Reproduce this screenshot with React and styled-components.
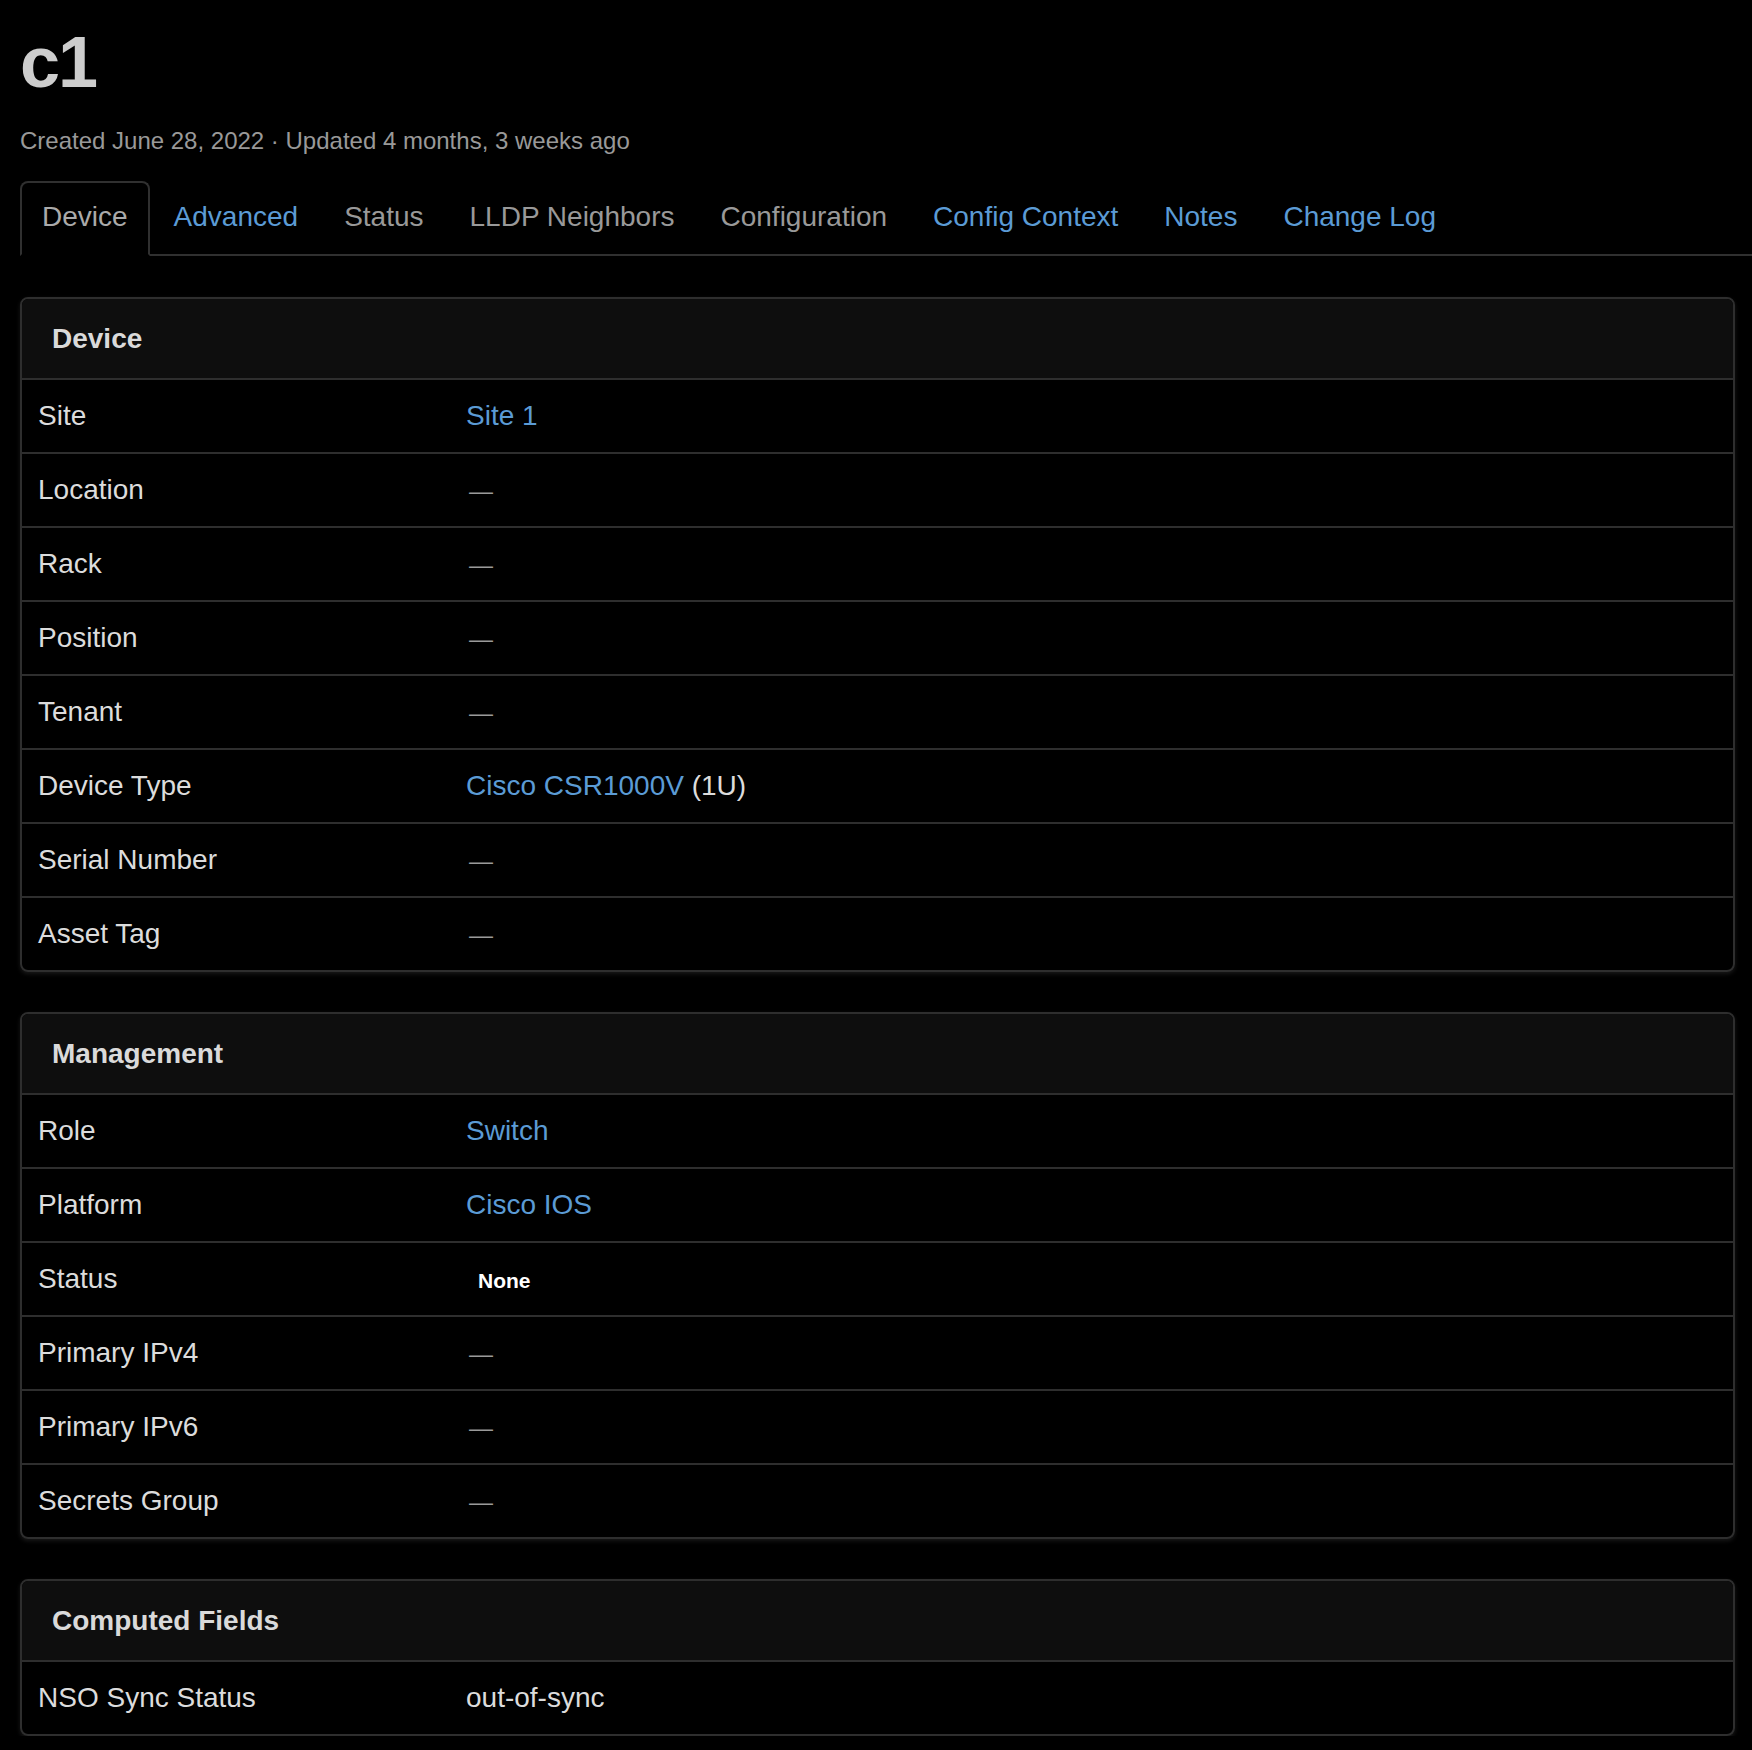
import React from 'react'
import styled, { createGlobalStyle } from 'styled-components'

const GlobalStyle = createGlobalStyle`
    body {
        margin: 0;
        background: #000;
        color: #dcdcdc;
        font-family: "Liberation Sans", Helvetica, Arial, sans-serif;
    }
`

const Page = styled.div`
    padding: 0 17px 0 20px;
`

const Title = styled.h1`
    margin: 23px 0 0;
    font-size: 72px;
    line-height: 79px;
    font-weight: 700;
    letter-spacing: -2px;
    color: #cdcdcd;
`

const Subtitle = styled.p`
    margin: 22px 0 0;
    font-size: 24px;
    line-height: 34px;
    color: #999;
`

const Tabs = styled.ul`
    display: flex;
    list-style: none;
    margin: 23px -17px 0 0;
    padding: 0;
    border-bottom: 2px solid #303030;
`

const Tab = styled.li`
    margin: 0 2px -2px 0;
    padding: 14px 20px 17px;
    font-size: 28px;
    line-height: 40px;
    border: 2px solid ${(p) => (p.$active ? '#303030' : 'transparent')};
    border-bottom-color: ${(p) => (p.$active ? '#000' : 'transparent')};
    border-radius: 8px 8px 0 0;
    background: ${(p) => (p.$active ? '#000' : 'transparent')};
    color: ${(p) => (p.$active ? '#aaa' : p.$link ? '#5b9bd5' : '#999')};
`

const Panel = styled.section`
    margin-top: 41px;
    border: 2px solid #2e2e2e;
    border-radius: 8px;
    overflow: hidden;
    box-shadow: 0 2px 4px rgba(40, 40, 40, 0.6);

    & + & {
        margin-top: 40px;
    }
`

const PanelHeading = styled.div`
    padding: 20px 30px 19px;
    background: #0e0e0e;
    font-size: 28px;
    line-height: 40px;
    font-weight: 700;
    color: #dadada;
`

const Row = styled.div`
    display: grid;
    grid-template-columns: 428px 1fr;
    border-top: 2px solid #2e2e2e;
`

const Cell = styled.div`
    padding: 16px;
    font-size: 28px;
    line-height: 40px;
    height: 40px;
    color: #dcdcdc;
`

const Link = styled.a`
    color: #5b9bd5;
    text-decoration: none;
`

const Dash = styled.span`
    margin-left: 3px;
    font-size: 24px;
    line-height: 1;
    color: #9a9a9a;
`

const Badge = styled.span`
    display: inline-block;
    padding: 0 12px;
    font-size: 21px;
    line-height: 1;
    font-weight: 700;
    color: #fff;
`

const dash = <Dash>—</Dash>

const TABS = [
    { label: 'Device', active: true },
    { label: 'Advanced', link: true },
    { label: 'Status' },
    { label: 'LLDP Neighbors' },
    { label: 'Configuration' },
    { label: 'Config Context', link: true },
    { label: 'Notes', link: true },
    { label: 'Change Log', link: true },
]

const PANELS = [
    {
        title: 'Device',
        rows: [
            ['Site', <Link href="#">Site 1</Link>],
            ['Location', dash],
            ['Rack', dash],
            ['Position', dash],
            ['Tenant', dash],
            [
                'Device Type',
                <>
                    <Link href="#">Cisco CSR1000V</Link> (1U)
                </>,
            ],
            ['Serial Number', dash],
            ['Asset Tag', dash],
        ],
    },
    {
        title: 'Management',
        rows: [
            ['Role', <Link href="#">Switch</Link>],
            ['Platform', <Link href="#">Cisco IOS</Link>],
            ['Status', <Badge>None</Badge>],
            ['Primary IPv4', dash],
            ['Primary IPv6', dash],
            ['Secrets Group', dash],
        ],
    },
    {
        title: 'Computed Fields',
        rows: [['NSO Sync Status', 'out-of-sync']],
    },
]

const App = () => (
    <Page>
        <GlobalStyle />
        <Title>c1</Title>
        <Subtitle>Created June 28, 2022 · Updated 4 months, 3 weeks ago</Subtitle>
        <Tabs>
            {TABS.map((t) => (
                <Tab key={t.label} $active={t.active} $link={t.link}>
                    {t.label}
                </Tab>
            ))}
        </Tabs>
        {PANELS.map((panel) => (
            <Panel key={panel.title}>
                <PanelHeading>{panel.title}</PanelHeading>
                {panel.rows.map(([label, value]) => (
                    <Row key={label}>
                        <Cell>{label}</Cell>
                        <Cell>{value}</Cell>
                    </Row>
                ))}
            </Panel>
        ))}
    </Page>
)

export default App
